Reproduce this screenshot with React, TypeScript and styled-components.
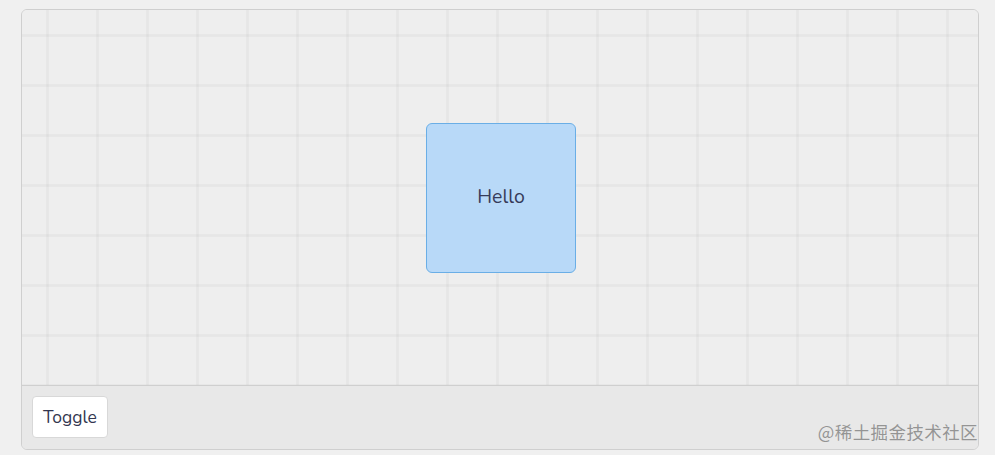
import React, { useState } from "react";
import styled, { createGlobalStyle } from "styled-components";

const Global = createGlobalStyle`
  html, body { margin: 0; padding: 0; background: #f0f0f0; }
  body { font-family: "Nunito", Lato, "Noto Sans", sans-serif; }
`;

const Page = styled.div`
  padding: 9px 16px 0 21px;
  position: relative;
  height: 455px;
  box-sizing: border-box;
`;

const Panel = styled.div`
  width: 958px;
  height: 441px;
  box-sizing: border-box;
  border: 1px solid #cfcfcf;
  border-radius: 6px;
  overflow: hidden;
  display: flex;
  flex-direction: column;
  background: #eeeeee;
`;

const Canvas = styled.div`
  flex: 0 0 375px;
  display: flex;
  align-items: center;
  justify-content: center;
  border-bottom: 1px solid #cfcfcf;
  background-color: #eeeeee;
  background-image:
    linear-gradient(to right, rgba(0,0,0,0.018) 0, rgba(0,0,0,0.035) 1px, rgba(0,0,0,0.035) 2px, rgba(0,0,0,0.018) 3px, transparent 3px),
    linear-gradient(to bottom, rgba(0,0,0,0.018) 0, rgba(0,0,0,0.035) 1px, rgba(0,0,0,0.035) 2px, rgba(0,0,0,0.018) 3px, transparent 3px);
  background-size: 50px 50px;
  background-position: 24px 24px;
`;

const Box = styled.div<{ $on: boolean }>`
  width: 150px;
  height: 150px;
  margin-left: 2px;
  box-sizing: border-box;
  border: 1px solid #6aaee6;
  border-radius: 6px;
  background: ${(p) => (p.$on ? "#b8d9f8" : "#f8d9b8")};
  display: flex;
  align-items: center;
  justify-content: center;
  font-size: 19.5px;
  color: #373c5a;
  padding-bottom: 2px;
`;

const Footer = styled.div`
  flex: 1;
  background: #e8e8e8;
  padding: 10px 10px;
  display: flex;
  align-items: flex-start;
`;

const Button = styled.button`
  height: 42px;
  padding: 0 10px;
  background: #ffffff;
  border: 1px solid #d8d8d8;
  border-radius: 4px;
  font-family: "Nunito", Lato, "Noto Sans", sans-serif;
  font-size: 17.5px;
  color: #33364f;
  cursor: pointer;
`;

const Watermark = styled.div`
  position: absolute;
  right: 17px;
  bottom: 11px;
  font-family: "Noto Sans CJK SC", "Liberation Sans", sans-serif;
  font-size: 17.5px;
  color: rgba(120, 120, 120, 0.75);
  letter-spacing: 0.4px;
`;

export default function App() {
  const [on, setOn] = useState(true);
  return (
    <>
      <Global />
      <Page>
        <Panel>
          <Canvas>
            <Box $on={on}>Hello</Box>
          </Canvas>
          <Footer>
            <Button onClick={() => setOn(!on)}>Toggle</Button>
          </Footer>
        </Panel>
        <Watermark>@稀土掘金技术社区</Watermark>
      </Page>
    </>
  );
}
